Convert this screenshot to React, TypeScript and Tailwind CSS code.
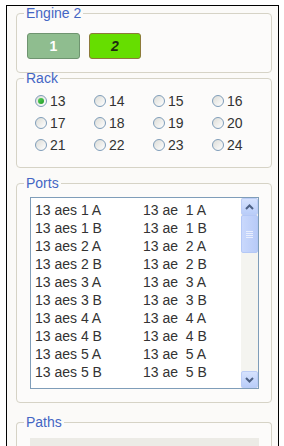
const racks = [13, 14, 15, 16, 17, 18, 19, 20, 21, 22, 23, 24];

const ports = ['1 A', '1 B', '2 A', '2 B', '3 A', '3 B', '4 A', '4 B', '5 A', '5 B'];

const font = { fontFamily: '"Liberation Sans", Arial, sans-serif' };

function GroupBox({ title, className, children }: { title: string; className?: string; children?: React.ReactNode }) {
  return (
    <fieldset className={`border border-[#d6d3c6] rounded-[4px] bg-[#fcfbfa] ${className ?? ''}`}>
      <legend className="ml-[7px] px-[2px] text-[14px] leading-[14px] text-[#4466c4]">{title}</legend>
      {children}
    </fieldset>
  );
}

function Radio({ checked }: { checked?: boolean }) {
  return (
    <span className="w-[12px] h-[12px] rounded-full border border-[#7f9db9] bg-gradient-to-br from-[#dcdcd7] to-white flex items-center justify-center">
      {checked && <span className="w-[6px] h-[6px] rounded-full bg-gradient-to-br from-[#55d35b] to-[#1f9a25]" />}
    </span>
  );
}

function ScrollButton({ up }: { up?: boolean }) {
  return (
    <div className="h-[17px] w-[17px] rounded-[2px] border border-[#bccdf6] bg-gradient-to-b from-[#d6e2fd] to-[#b9cdf9] flex items-center justify-center">
      <svg width="9" height="6" viewBox="0 0 9 6">
        <path d={up ? 'M1 5 L4.5 1.5 L8 5' : 'M1 1 L4.5 4.5 L8 1'} stroke="#4d6185" strokeWidth="2" fill="none" />
      </svg>
    </div>
  );
}

export default function App() {
  return (
    <div className="w-[284px] h-[446px] bg-white overflow-hidden" style={font}>
      <div className="ml-[6px] mt-[5px] w-[273px] h-[441px] border-l border-t border-r border-black bg-[#fbfaf8] pl-[9px] flex flex-col">
        <GroupBox title="Engine 2" className="w-[256px] h-[67px] shrink-0">
          <div className="flex gap-[9px] pl-[10px] pt-[13px]">
            <button className="w-[53px] h-[26px] rounded-[3px] border border-[#6f9470] bg-[#8fbd8f] text-white font-bold text-[14px]">
              1
            </button>
            <button className="w-[52px] h-[26px] rounded-[3px] border border-[#8d7a3a] bg-[#66de00] text-[#1e2a10] font-bold italic text-[14px]">
              2
            </button>
          </div>
        </GroupBox>
        <GroupBox title="Rack" className="w-[256px] h-[97px] mt-[-2px] shrink-0">
          <div className="grid grid-cols-4 pl-[18px] pt-[8px] gap-y-[6px]">
            {racks.map((r) => (
              <div key={r} className="flex items-center gap-[3px] h-[16px] text-[14px] text-[#333]">
                <Radio checked={r === 13} />
                <span>{r}</span>
              </div>
            ))}
          </div>
        </GroupBox>
        <GroupBox title="Ports" className="w-[256px] h-[227px] mt-[8px] shrink-0">
          <div className="ml-[13px] mt-[7px] w-[229px] h-[192px] border border-[#7f9db9] bg-white flex">
            <div className="flex-1 pt-[3px] pl-[4px]">
              {ports.map((p) => (
                <div key={p} className="flex h-[18px] items-center text-[14px] text-[#333]">
                  <span className="w-[108px]">13 aes {p}</span>
                  <span className="whitespace-pre">13 ae  {p}</span>
                </div>
              ))}
            </div>
            <div className="w-[17px] flex flex-col bg-[#f4f4f0]">
              <ScrollButton up />
              <div className="h-[38px] rounded-[2px] border border-[#b4c8f6] bg-gradient-to-r from-[#c9d8fc] to-[#b8cbf8] flex flex-col items-center justify-center gap-[1px]">
                <span className="w-[7px] h-[1px] bg-[#e8eefd]" />
                <span className="w-[7px] h-[1px] bg-[#e8eefd]" />
                <span className="w-[7px] h-[1px] bg-[#e8eefd]" />
                <span className="w-[7px] h-[1px] bg-[#e8eefd]" />
              </div>
              <div className="flex-1" />
              <ScrollButton />
            </div>
          </div>
        </GroupBox>
        <GroupBox title="Paths" className="w-[256px] flex-1 mt-[12px] border-b-0">
          <div className="ml-[13px] mt-[9px] w-[229px] h-[20px] bg-[#ecebe6]" />
        </GroupBox>
      </div>
    </div>
  );
}
